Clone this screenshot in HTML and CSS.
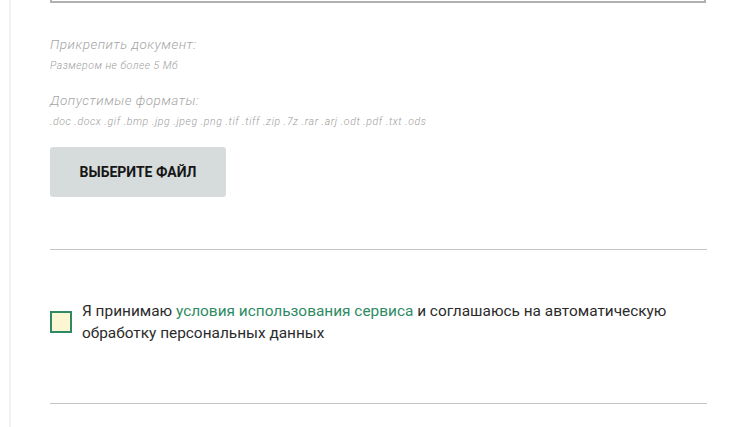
FILE: index.html
```html
<!DOCTYPE html>
<html lang="ru">
<head>
<meta charset="utf-8">
<title>Форма</title>
<link rel="stylesheet" href="styles.css">
</head>
<body>
<div class="page">
  <div class="form">
    <div class="textarea-end"></div>
    <div class="attach">
      <p class="label">Прикрепить документ:</p>
      <p class="hint">Размером не более 5 Мб</p>
      <p class="label label-second">Допустимые форматы:</p>
      <p class="hint hint-formats">.doc .docx .gif .bmp .jpg .jpeg .png .tif .tiff .zip .7z .rar .arj .odt .pdf .txt .ods</p>
      <button class="file-btn" type="button">ВЫБЕРИТЕ ФАЙЛ</button>
    </div>
    <hr class="divider">
    <div class="agree">
      <span class="checkbox"></span>
      <p class="agree-text">Я принимаю <a href="#" class="link">условия использования сервиса</a> и соглашаюсь на автоматическую обработку персональных данных</p>
    </div>
    <hr class="divider divider-bottom">
  </div>
</div>
</body>
</html>
```
FILE: styles.css
```css
html, body {
  margin: 0;
  padding: 0;
  background: #ffffff;
}
.page {
  margin-left: 9px;
  border-left: 2px solid #f2f2f2;
  min-height: 427px;
  padding-left: 39px;
  width: 657px;
  font-family: Roboto, "Liberation Sans", sans-serif;
}
.form {
  display: flex;
  flex-direction: column;
}
.textarea-end {
  height: 1px;
  border: 2px solid #b1b1b1;
  border-top: none;
  margin-right: 1px;
}
.attach {
  padding-top: 31px;
  display: flex;
  flex-direction: column;
  align-items: flex-start;
}
.label {
  margin: 0;
  font-style: italic;
  font-size: 13.5px;
  letter-spacing: 0.5px;
  line-height: 20px;
  color: #a5a5a5;
  font-weight: 300;
}
.label-second {
  margin-top: 17px;
}
.hint {
  margin: 5px 0 0;
  font-style: italic;
  font-size: 10.5px;
  letter-spacing: 0.5px;
  line-height: 14px;
  color: #9c9c9c;
  font-weight: 300;
}
.hint-formats {
  letter-spacing: 0.58px;
}
.file-btn {
  margin-top: 18px;
  width: 176px;
  height: 50px;
  border: none;
  border-radius: 3px;
  background: #d6dbdc;
  color: #161616;
  font-family: Roboto, "Liberation Sans", sans-serif;
  font-weight: 700;
  font-size: 14px;
  padding: 0;
}
.divider {
  margin: 52px 0 0;
  border: none;
  border-top: 1px solid #c4c4c4;
  height: 0;
}
.agree {
  margin-top: 50px;
  display: flex;
  align-items: center;
  gap: 10px;
}
.checkbox {
  flex: none;
  width: 18px;
  height: 18px;
  border: 2px solid #2f8a63;
  background: #fdf6d3;
}
.agree-text {
  margin: 0;
  font-size: 15.4px;
  line-height: 22px;
  color: #2b2b2b;
}
.link {
  color: #2e8b63;
  text-decoration: none;
}
.divider-bottom {
  margin-top: 59px;
}
```
